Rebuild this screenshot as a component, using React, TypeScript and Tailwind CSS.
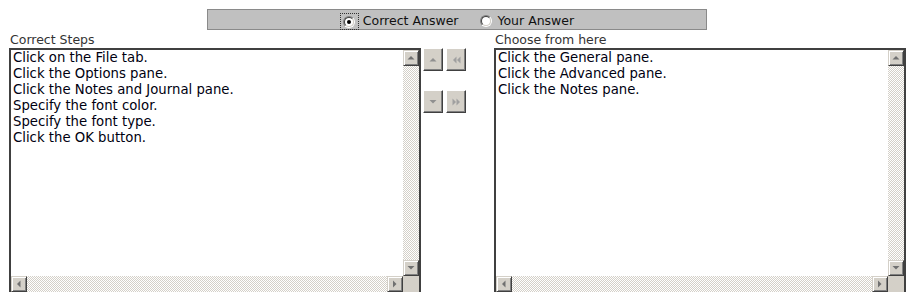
import React from "react";

const checker =
  "bg-[repeating-conic-gradient(#d4d0c8_0_25%,#ffffff_0_50%)] bg-[length:2px_2px]";

function Tri({ dir, color = "#707070" }: { dir: "up" | "down" | "left" | "right"; color?: string }) {
  const pts =
    dir === "up"
      ? "0.5,4.5 7.5,4.5 4,1"
      : dir === "down"
      ? "0.5,1 7.5,1 4,4.5"
      : dir === "left"
      ? "4.5,0.5 4.5,7.5 1,4"
      : "1,0.5 1,7.5 4.5,4";
  const w = dir === "up" || dir === "down" ? 8 : 6;
  const h = dir === "up" || dir === "down" ? 6 : 8;
  return (
    <svg width={w} height={h} viewBox={`0 0 ${w} ${h}`}>
      <polygon points={pts} fill={color} />
    </svg>
  );
}

function SBtn({ dir }: { dir: "up" | "down" | "left" | "right" }) {
  return (
    <div className="w-[16px] h-[16px] shrink-0 bg-[#d4d0c8] border border-t-[#d4d0c8] border-l-[#d4d0c8] border-r-[#404040] border-b-[#404040] shadow-[inset_1px_1px_#ffffff,inset_-1px_-1px_#808080] flex items-center justify-center">
      <Tri dir={dir} />
    </div>
  );
}

function ListBox({ items }: { items: string[] }) {
  return (
    <div className="w-[412px] h-[246px] border-2 border-[#404040] bg-white flex flex-col">
      <div className="flex flex-1 min-h-0">
        <div className="flex-1 pl-[2px] text-[13.25px] leading-[16px] text-[#000010]">
          {items.map((t) => (
            <div key={t} className="whitespace-nowrap">
              {t}
            </div>
          ))}
        </div>
        <div className="w-[16px] flex flex-col">
          <SBtn dir="up" />
          <div className={`flex-1 ${checker}`} />
          <SBtn dir="down" />
        </div>
      </div>
      <div className="h-[16px] flex">
        <SBtn dir="left" />
        <div className={`flex-1 ${checker}`} />
        <SBtn dir="right" />
        <div className="w-[16px] bg-[#d4d0c8]" />
      </div>
    </div>
  );
}

function Radio({ checked }: { checked: boolean }) {
  return (
    <div className="w-[12px] h-[12px] rounded-full border border-t-[#808080] border-l-[#808080] border-r-white border-b-white">
      <div className="w-full h-full rounded-full border border-t-[#404040] border-l-[#404040] border-r-[#d4d0c8] border-b-[#d4d0c8] bg-white flex items-center justify-center">
        {checked && <div className="w-[4px] h-[4px] rounded-full bg-black" />}
      </div>
    </div>
  );
}

function MBtn({ children }: { children: React.ReactNode }) {
  return (
    <div className="w-[20px] h-[23px] bg-[#d4d0c8] border border-t-white border-l-white border-r-[#404040] border-b-[#404040] shadow-[inset_-1px_-1px_#808080] flex items-center justify-center">
      {children}
    </div>
  );
}

function Double({ dir }: { dir: "left" | "right" }) {
  const c = "#a0a0a0";
  return (
    <svg width="9" height="8" viewBox="0 0 9 8">
      {dir === "left" ? (
        <>
          <polygon points="4.5,0.5 4.5,7.5 1,4" fill={c} />
          <polygon points="8.5,0.5 8.5,7.5 5,4" fill={c} />
        </>
      ) : (
        <>
          <polygon points="0.5,0.5 0.5,7.5 4,4" fill={c} />
          <polygon points="4.5,0.5 4.5,7.5 8,4" fill={c} />
        </>
      )}
    </svg>
  );
}

export default function App() {
  return (
    <div
      className="w-[922px] h-[292px] overflow-hidden bg-white pl-[9px] pt-[9px]"
      style={{ fontFamily: '"DejaVu Sans", Verdana, sans-serif' }}
    >
      <div className="ml-[198px] w-[500px] h-[21px] bg-[#c0c0c0] border border-[#8a8a8a] flex items-center justify-center text-[12.5px] text-[#111]">
        <div className="w-[19px] h-[17px] mt-[4px] border border-dotted border-[#333] flex items-center justify-center">
          <Radio checked />
        </div>
        <span className="ml-[4px] mt-[4px]">Correct Answer</span>
        <div className="ml-[22px] mt-[2px]">
          <Radio checked={false} />
        </div>
        <span className="ml-[5px] mt-[4px]">Your Answer</span>
      </div>
      <div className="flex mt-[2px]">
        <div className="flex flex-col">
          <div className="h-[16px] pl-[1px] text-[12.5px] leading-[16px] text-[#333]">Correct Steps</div>
          <ListBox
            items={[
              "Click on the File tab.",
              "Click the Options pane.",
              "Click the Notes and Journal pane.",
              "Specify the font color.",
              "Specify the font type.",
              "Click the OK button.",
            ]}
          />
        </div>
        <div className="ml-[2px] w-[43px] pt-[16px] flex flex-col gap-[19px]">
          <div className="flex gap-[3px]">
            <MBtn>
              <Tri dir="up" color="#909090" />
            </MBtn>
            <MBtn>
              <Double dir="left" />
            </MBtn>
          </div>
          <div className="flex gap-[3px]">
            <MBtn>
              <Tri dir="down" color="#909090" />
            </MBtn>
            <MBtn>
              <Double dir="right" />
            </MBtn>
          </div>
        </div>
        <div className="ml-[28px] flex flex-col">
          <div className="h-[16px] pl-[1px] text-[12.5px] leading-[16px] text-[#333]">Choose from here</div>
          <ListBox
            items={["Click the General pane.", "Click the Advanced pane.", "Click the Notes pane."]}
          />
        </div>
      </div>
    </div>
  );
}
